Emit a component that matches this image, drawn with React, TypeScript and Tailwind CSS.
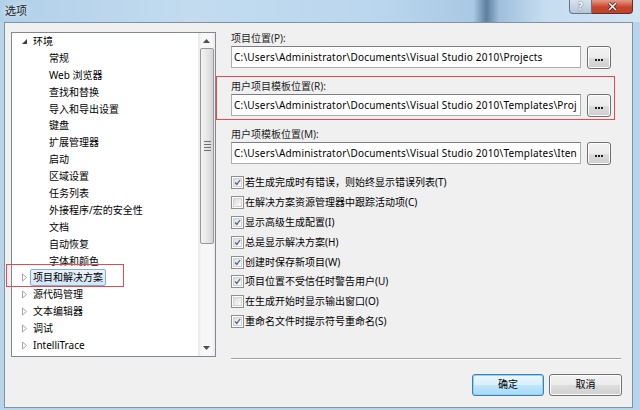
import React from "react";

interface TreeItem {
  label: string;
  level: number;
  expanded?: boolean;
  selected?: boolean;
}

const treeItems: TreeItem[] = [
  { label: "环境", level: 0, expanded: true },
  { label: "常规", level: 1 },
  { label: "Web 浏览器", level: 1 },
  { label: "查找和替换", level: 1 },
  { label: "导入和导出设置", level: 1 },
  { label: "键盘", level: 1 },
  { label: "扩展管理器", level: 1 },
  { label: "启动", level: 1 },
  { label: "区域设置", level: 1 },
  { label: "任务列表", level: 1 },
  { label: "外接程序/宏的安全性", level: 1 },
  { label: "文档", level: 1 },
  { label: "自动恢复", level: 1 },
  { label: "字体和颜色", level: 1 },
  { label: "项目和解决方案", level: 0, selected: true },
  { label: "源代码管理", level: 0 },
  { label: "文本编辑器", level: 0 },
  { label: "调试", level: 0 },
  { label: "IntelliTrace", level: 0 },
];

const options = [
  { label: "若生成完成时有错误，则始终显示错误列表(T)", checked: true },
  { label: "在解决方案资源管理器中跟踪活动项(C)", checked: false },
  { label: "显示高级生成配置(I)", checked: true },
  { label: "总是显示解决方案(H)", checked: true },
  { label: "创建时保存新项目(W)", checked: true },
  { label: "项目位置不受信任时警告用户(U)", checked: true },
  { label: "在生成开始时显示输出窗口(O)", checked: false },
  { label: "重命名文件时提示符号重命名(S)", checked: true },
];

const Arrow = ({ expanded }: { expanded?: boolean }) =>
  expanded ? (
    <svg width="7" height="7" viewBox="0 0 7 7">
      <path d="M6 1 L6 6 L1 6 Z" fill="#3c3c3c" />
    </svg>
  ) : (
    <svg width="7" height="9" viewBox="0 0 7 9">
      <path d="M1.5 1 L5.5 4.5 L1.5 8 Z" fill="none" stroke="#a6a6a6" />
    </svg>
  );

const TreeRow = ({ item }: { item: TreeItem }) => {
  if (item.level === 1) {
    return (
      <div className="h-[16.9px] leading-[16.9px] pl-[37px] whitespace-nowrap">{item.label}</div>
    );
  }
  return (
    <div className="h-[16.9px] flex items-center pl-[9px] whitespace-nowrap">
      <span className="w-[7px] flex items-center justify-center">
        <Arrow expanded={item.expanded} />
      </span>
      <span
        className={
          item.selected
            ? "ml-[2px] px-[2px] h-[17px] leading-[15px] border border-[#84acdd] rounded-[2px] bg-[linear-gradient(#eaf3fc,#d5e6f7)]"
            : "ml-[2px] px-[2px] h-[17px] leading-[15px] border border-transparent"
        }
      >
        {item.label}
      </span>
    </div>
  );
};

const DialogButton = ({ children, primary, width }: { children: React.ReactNode; primary?: boolean; width: string }) => (
  <div
    className={`${width} h-[22px] flex items-center justify-center rounded-[3px] border ${
      primary
        ? "border-[#3c7fb1] shadow-[inset_0_0_0_1px_#8fd3f5] bg-[linear-gradient(#eaf6fd_0%,#d9f0fc_50%,#bee6fd_51%,#a7d9f5_100%)]"
        : "border-[#707070] shadow-[inset_0_0_0_1px_#fcfcfc] bg-[linear-gradient(#f2f2f2_0%,#ebebeb_50%,#dddddd_51%,#cfcfcf_100%)]"
    }`}
  >
    {children}
  </div>
);

const BrowseButton = () => (
  <div className="w-[24px] h-[23px] shrink-0 rounded-[3px] border border-[#707070] shadow-[inset_0_0_0_1px_#fcfcfc] bg-[linear-gradient(#f2f2f2_0%,#ebebeb_50%,#dddddd_51%,#cfcfcf_100%)] flex items-center justify-center pt-[5px] gap-[1px]">
    <div className="w-[2px] h-[2px] bg-[#202020]" />
    <div className="w-[2px] h-[2px] bg-[#202020]" />
    <div className="w-[2px] h-[2px] bg-[#202020]" />
  </div>
);

const Field = ({ label, value, first }: { label: string; value: string; first?: boolean }) => (
  <div className={first ? "" : "mt-[10px]"}>
    <div className="h-[15px] leading-[15px] text-[#1e1e1e]">{label}</div>
    <div className="flex gap-[6px]">
      <div className="w-[350px] h-[22px] border border-[#abadb3] border-t-[#7a7e86] bg-white pl-[2px] leading-[20px] whitespace-nowrap overflow-hidden tracking-[0.2px]">
        {value}
      </div>
      <BrowseButton />
    </div>
  </div>
);

const CheckBox = ({ checked }: { checked: boolean }) => (
  <div className="w-[13px] h-[13px] border border-[#8e8f8f] bg-white p-[1px] shrink-0">
    <div className="w-full h-full bg-[linear-gradient(135deg,#dcdcdc,#fbfbfb)] border border-[#d2d2d2] flex items-center justify-center">
      {checked && (
        <svg width="9" height="9" viewBox="0 0 9 9">
          <path d="M1.5 4.5 L3.6 7 L7.8 1.3" fill="none" stroke="#4a5f86" strokeWidth="1.5" />
        </svg>
      )}
    </div>
  </div>
);

export default function App() {
  return (
    <div className="relative w-[640px] h-[410px] overflow-hidden bg-[#b9d3e8] font-['Noto_Sans','Noto_Sans_CJK_SC',sans-serif] text-[10px] text-black">
      {/* title bar */}
      <div className="h-[22px] flex items-center bg-[linear-gradient(90deg,#b2d0ea_0%,#c2dbef_30%,#bad6ee_60%,#a9c8e3_74%,#5f7f9f_76%,#9fbfdc_78%,#c6ddf0_85%,#d3e4f2_100%)]">
        <span className="pl-[5px] text-[11px] text-[#1b1b1b] [text-shadow:0_0_6px_#ffffff]">选项</span>
      </div>

      {/* caption buttons */}
      <div className="absolute top-0 right-[7px] flex">
        <div className="w-[23px] h-[14px] rounded-bl-[4px] border border-t-0 border-[#62758c] bg-[linear-gradient(#d8e4ef,#b4c6d8)] flex items-center justify-center text-[10px] font-bold text-white [text-shadow:0_0_2px_#34465a]">
          ?
        </div>
        <div className="w-[41px] h-[14px] rounded-br-[4px] border border-t-0 border-l-0 border-[#6b2a22] bg-[linear-gradient(#e59a86,#c9452c_55%,#c04028)] flex items-center justify-center">
          <svg width="11" height="9" viewBox="0 0 11 9">
            <path d="M2 1 L9 8 M9 1 L2 8" stroke="#3a1a16" strokeWidth="3" />
            <path d="M2 1 L9 8 M9 1 L2 8" stroke="#ffffff" strokeWidth="1.6" />
          </svg>
        </div>
      </div>

      {/* client area */}
      <div className="ml-[4px] w-[629px] h-[386px] bg-[#f0f0f0] border border-[#7f93a8] flex">
        {/* tree */}
        <div className="ml-[6px] mt-[9px] w-[205px] h-[325px] border border-[#828790] bg-white flex">
          <div className="flex-1 overflow-hidden">
            {treeItems.map((item) => (
              <TreeRow key={item.label} item={item} />
            ))}
          </div>
          <div className="w-[17px] bg-[linear-gradient(90deg,#e6e6e6,#f7f7f7_20%,#f7f7f7_80%,#ececec)] flex flex-col">
            <div className="h-[15px] flex items-center justify-center">
              <svg width="7" height="4" viewBox="0 0 7 4">
                <path d="M0 4 L3.5 0 L7 4 Z" fill="#4d4d4d" />
              </svg>
            </div>
            <div className="ml-[2px] mr-[1px] h-[196px] rounded-[2px] border border-[#979797] bg-[linear-gradient(90deg,#f3f3f3,#e6e6e6_50%,#d4d4d4)] flex flex-col items-center justify-center gap-[2px]">
              <div className="w-[7px] h-[1px] bg-[#6f6f6f]" />
              <div className="w-[7px] h-[1px] bg-[#6f6f6f]" />
              <div className="w-[7px] h-[1px] bg-[#6f6f6f]" />
              <div className="w-[7px] h-[1px] bg-[#6f6f6f]" />
            </div>
            <div className="flex-1" />
            <div className="h-[16px] flex items-center justify-center">
              <svg width="7" height="4" viewBox="0 0 7 4">
                <path d="M0 0 L3.5 4 L7 0 Z" fill="#4d4d4d" />
              </svg>
            </div>
          </div>
        </div>

        {/* right side */}
        <div className="ml-[15px] mt-[8px] w-[391px] flex flex-col">
          <Field first label="项目位置(P):" value={"C:\\Users\\Administrator\\Documents\\Visual Studio 2010\\Projects"} />
          <Field label="用户项目模板位置(R):" value={"C:\\Users\\Administrator\\Documents\\Visual Studio 2010\\Templates\\Proj"} />
          <Field label="用户项模板位置(M):" value={"C:\\Users\\Administrator\\Documents\\Visual Studio 2010\\Templates\\Iten"} />

          <div className="mt-[8px]">
            {options.map((opt) => (
              <div key={opt.label} className="h-[19.8px] flex items-center">
                <CheckBox checked={opt.checked} />
                <span className="ml-[1px] whitespace-nowrap">{opt.label}</span>
              </div>
            ))}
          </div>

          <div className="mt-[26.5px] w-[390px] h-[2px] border-t border-[#a0a0a0] border-b border-b-white" />

          <div className="mt-[14px] flex justify-end gap-[5px]">
            <DialogButton primary width="w-[72px]">确定</DialogButton>
            <DialogButton width="w-[73px]">取消</DialogButton>
          </div>
        </div>
      </div>

      {/* red annotation boxes */}
      <div className="absolute left-[6px] top-[264px] w-[118px] h-[23px] border-[1.5px] border-[#e64a4c]" />
      <div className="absolute left-[216px] top-[76px] w-[399px] h-[44px] border-[1.5px] border-[#e64a4c]" />
    </div>
  );
}
